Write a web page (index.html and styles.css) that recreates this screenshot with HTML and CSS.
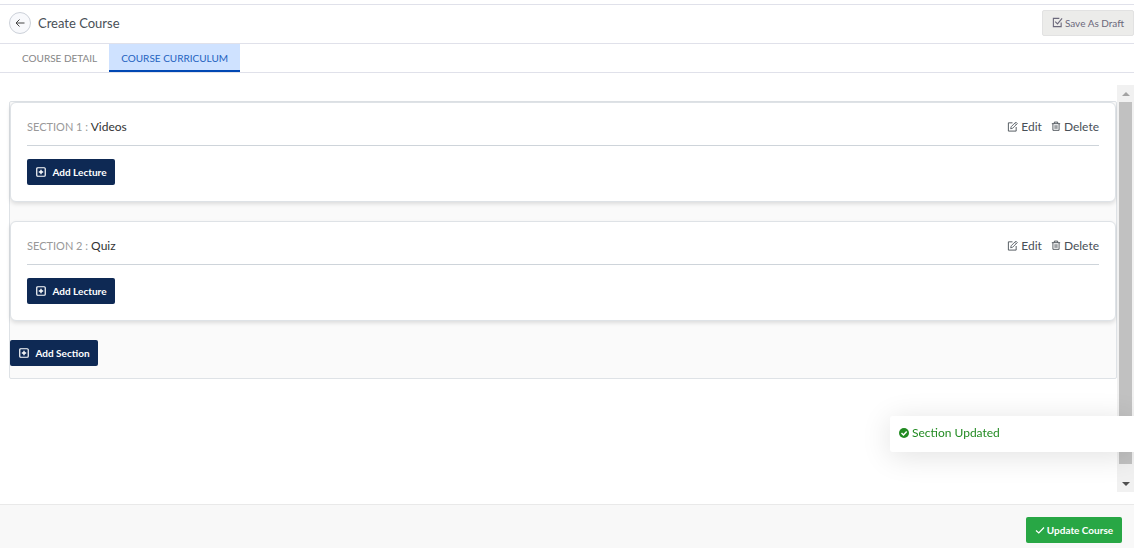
FILE: index.html
```html
<!DOCTYPE html>
<html lang="en">
<head>
  <meta charset="UTF-8" />
  <meta name="viewport" content="width=device-width, initial-scale=1.0" />
  <title>Create Course</title>
  <link rel="stylesheet" href="styles.css">
</head>
<body>
  <!-- shared icons -->
  <svg class="sprite" aria-hidden="true">
    <symbol id="icon-plus" viewBox="0 0 12 12">
      <rect x="1.75" y="1.75" width="8.5" height="8.5" rx="1" fill="none" stroke="currentColor" stroke-width="1.2" />
      <path d="M6 3.8v4.4M3.8 6h4.4" fill="none" stroke="currentColor" stroke-width="1.4" />
    </symbol>
    <symbol id="icon-edit" viewBox="0 0 12 12">
      <path d="M6 2H1.5v9h8.5V6.5" fill="none" stroke="currentColor" />
      <path d="M4 8.5l.5-2.2L9.6 1.2l1.6 1.6L6.2 7.9z M8.4 2.4l1.6 1.6" fill="none" stroke="currentColor" stroke-width=".9" />
    </symbol>
    <symbol id="icon-trash" viewBox="0 0 12 12">
      <path d="M1 3.2h10M4 3V1.3h4V3M2.3 3.5v7.7h7.4V3.5M4.9 5v4.500M7.1 5v4.500" fill="none" stroke="currentColor" stroke-width="1.1" />
    </symbol>
  </svg>

  <header class="page-header">
    <button class="back" type="button" aria-label="Back">
      <svg width="12" height="12" viewBox="0 0 12 12"><path d="M10.500 6H2M5.500 2.500L2 6l3.500 3.500" fill="none" stroke="currentColor" /></svg>
    </button>
    <h1>Create Course</h1>
    <button class="btn btn-draft" type="button">
      <svg width="11" height="11" viewBox="0 0 12 12"><path d="M8 1.500H1.500v9h8.500V6M3.500 5L6 7.500l5-6" fill="none" stroke="currentColor" stroke-width="1.200" /></svg>
      Save As Draft
    </button>
  </header>

  <nav class="tabs">
    <a href="#detail">COURSE DETAIL</a>
    <a href="#curriculum" class="active">COURSE CURRICULUM</a>
  </nav>

  <div class="scroll-area">
    <main class="content">
      <div class="curriculum">
        <section class="card">
          <div class="card-head">
            <h2><span>SECTION 1 :</span> Videos</h2>
            <button class="link" type="button"><svg width="11" height="11"><use href="#icon-edit" /></svg>Edit</button>
            <button class="link" type="button"><svg width="10" height="10"><use href="#icon-trash" /></svg>Delete</button>
          </div>
          <button class="btn btn-navy" type="button"><svg width="12" height="12"><use href="#icon-plus" /></svg>Add Lecture</button>
        </section>
        <section class="card">
          <div class="card-head">
            <h2><span>SECTION 2 :</span> Quiz</h2>
            <button class="link" type="button"><svg width="11" height="11"><use href="#icon-edit" /></svg>Edit</button>
            <button class="link" type="button"><svg width="10" height="10"><use href="#icon-trash" /></svg>Delete</button>
          </div>
          <button class="btn btn-navy" type="button"><svg width="12" height="12"><use href="#icon-plus" /></svg>Add Lecture</button>
        </section>
        <button class="btn btn-navy" type="button"><svg width="12" height="12"><use href="#icon-plus" /></svg>Add Section</button>
      </div>
    </main>
    <div class="scrollbar" aria-hidden="true">
      <span class="arrow up"></span>
      <span class="thumb"></span>
      <span class="arrow down"></span>
    </div>
  </div>

  <footer class="page-footer">
    <button class="btn btn-update" type="button">
      <svg width="10" height="10" viewBox="0 0 10 10"><path d="M1 5.500l2.800 2.500L9 2.500" fill="none" stroke="currentColor" stroke-width="1.200" /></svg>
      Update Course
    </button>
  </footer>

  <div class="toast" role="status">
    <svg width="10" height="10" viewBox="0 0 10 10"><circle cx="5" cy="5" r="5" fill="currentColor" /><path d="M2.500 5l2 2 3.200-3.500" fill="none" stroke="#fff" stroke-width="1.500" /></svg>
    Section Updated
  </div>
</body>
</html>
```
FILE: styles.css
```css
* {
  box-sizing: border-box;
}
body {
  display: flex;
  flex-direction: column;
  min-height: 100vh;
  margin: 0;
  padding-top: 4px;
  background: #fff;
  color: #495057;
  font-family: Lato, sans-serif;
  font-size: 12px;
}
svg {
  flex: none;
}
.sprite {
  position: absolute;
  width: 0;
  height: 0;
}
button {
  font-family: inherit;
  cursor: pointer;
}
h1,
h2 {
  margin: 0;
  font-weight: normal;
}

/* header */
.page-header {
  display: flex;
  align-items: center;
  height: 40px;
  padding: 0 0 2px 9px;
  border-top: 1px solid #e0e1ea;
  border-bottom: 1px solid #e0e1ea;
}
.page-header h1 {
  flex: 1;
  margin-left: 7px;
  font-size: 13px;
}
.back {
  display: flex;
  align-items: center;
  justify-content: center;
  width: 22px;
  height: 22px;
  padding: 0;
  border: 1px solid #ccd1d9;
  border-radius: 50%;
  background: #f8f9fc;
  color: #444;
}

/* buttons */
.btn {
  display: flex;
  align-items: center;
  justify-content: center;
  height: 26px;
  padding: 0 0 1px;
  border: 0;
  border-radius: 2px;
  font-size: 10px;
}
.btn-draft {
  gap: 2px;
  width: 92px;
  border: 1px solid #e2e2e2;
  background: #ececea;
  color: #6b687b;
}
.btn-navy {
  gap: 5px;
  width: 88px;
  background: #0e2954;
  color: #fff;
  font-weight: bold;
}
.btn-update {
  gap: 2px;
  width: 96px;
  background: #28a745;
  color: #fff;
  font-weight: bold;
}

/* tabs */
.tabs {
  display: flex;
  height: 29px;
  padding-left: 10px;
  border-bottom: 1px solid #e0e1ea;
}
.tabs a {
  padding: 0 12px;
  color: #868686;
  font-size: 10px;
  line-height: 28px;
  text-decoration: none;
}
.tabs .active {
  border-bottom: 2px solid #0047b3;
  background: #cfe2ff;
  color: #2463c0;
}

/* sections */
.scroll-area {
  display: flex;
  flex: 1;
  margin: 12px 0;
}
.content {
  flex: 1;
  padding: 16px 0 0 9px;
}
.curriculum {
  padding-bottom: 12px;
  border: 1px solid #dee2e6;
  border-radius: 2px;
  background: #fafafa;
}
.card {
  margin-bottom: 19px;
  padding: 14px 16px 16px;
  border: 1px solid #dee2e6;
  border-radius: 6px;
  background: #fff;
  box-shadow: 0 2px 4px rgba(0, 0, 0, 0.12);
}
.card-head {
  display: flex;
  align-items: center;
  gap: 9px;
  height: 29px;
  margin-bottom: 13px;
  padding-bottom: 10px;
  border-bottom: 1px solid #ced4da;
}
.card-head h2 {
  flex: 1;
  color: #333;
  font-size: 12px;
}
.card-head h2 span {
  color: #999;
  font-size: 11px;
}
.link {
  display: flex;
  align-items: center;
  gap: 3px;
  padding: 0;
  border: 0;
  background: none;
  color: #495057;
  font-size: 12px;
}

.scrollbar {
  display: flex;
  flex-direction: column;
  align-items: center;
  width: 17px;
  background: #f1f1f1;
}
.arrow {
  display: flex;
  align-items: center;
  justify-content: center;
  height: 17px;
}
.arrow::before {
  content: "";
  border: 4px solid transparent;
}
.up::before {
  border-top: 0;
  border-bottom-color: #a3a3a3;
}
.down::before {
  border-bottom: 0;
  border-top-color: #505050;
}
.thumb {
  flex: 1;
  width: 13px;
  margin-bottom: 11px;
  background: #c1c1c1;
}

/* footer */
.page-footer {
  display: flex;
  align-items: flex-start;
  justify-content: flex-end;
  height: 44px;
  padding: 12px 12px 0;
  border-top: 1px solid #e9e9e9;
  background: #f8f8f8;
}

.toast {
  position: fixed;
  right: 0;
  bottom: 96px;
  display: flex;
  align-items: center;
  gap: 3px;
  width: 244px;
  height: 36px;
  padding: 0 9px 3px;
  border-radius: 3px 0 0 3px;
  background: #fff;
  color: #228b22;
  box-shadow: 0 4px 30px rgba(0, 0, 0, 0.12);
}
```
